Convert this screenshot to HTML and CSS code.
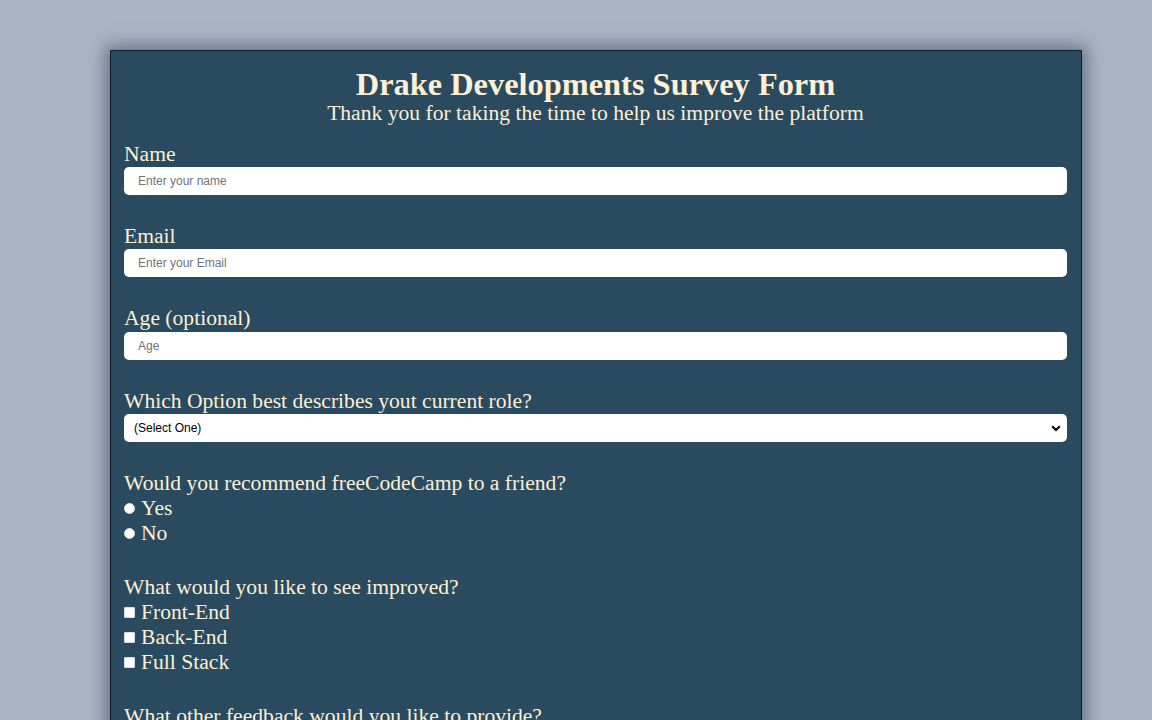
FILE: index.html
```html
<!DOCTYPE html>
<html lang="en">
<head>
<meta charset="utf-8">
<title>Drake Developments Survey Form</title>
<link rel="stylesheet" href="styles.css">
</head>
<body>
<main class="card">
  <header class="head">
    <h1 class="title">Drake Developments Survey Form</h1>
    <p class="subtitle">Thank you for taking the time to help us improve the platform</p>
  </header>
  <form class="form">
    <div class="group">
      <label class="label" for="name">Name</label>
      <input class="field" id="name" type="text" placeholder="Enter your name">
    </div>
    <div class="group">
      <label class="label" for="email">Email</label>
      <input class="field" id="email" type="email" placeholder="Enter your Email">
    </div>
    <div class="group">
      <label class="label" for="age">Age (optional)</label>
      <input class="field" id="age" type="number" placeholder="Age">
    </div>
    <div class="group">
      <label class="label" for="role">Which Option best describes yout current role?</label>
      <div class="select-wrap">
        <select class="field select" id="role">
          <option>(Select One)</option>
        </select>
        <svg class="chev" width="10" height="7" viewBox="0 0 10 7"><path d="M1.2 1.3 L5 5 L8.8 1.3" fill="none" stroke="#000" stroke-width="2"/></svg>
      </div>
    </div>
    <div class="group">
      <p class="label">Would you recommend freeCodeCamp to a friend?</p>
      <label class="choice"><input class="radio" type="radio" name="rec">Yes</label>
      <label class="choice"><input class="radio" type="radio" name="rec">No</label>
    </div>
    <div class="group">
      <p class="label">What would you like to see improved?</p>
      <label class="choice"><input class="check" type="checkbox">Front-End</label>
      <label class="choice"><input class="check" type="checkbox">Back-End</label>
      <label class="choice"><input class="check" type="checkbox">Full Stack</label>
    </div>
    <div class="group">
      <p class="label">What other feedback would you like to provide?</p>
    </div>
  </form>
</main>
</body>
</html>
```
FILE: styles.css
```css
html, body {
  margin: 0;
  padding: 0;
}
body {
  background: #abb4c4;
  font-family: "Liberation Serif", "Times New Roman", serif;
  color: #fdf0d5;
  padding: 50px 70px 40px 110px;
}
.card {
  background: #2a4a5f;
  border: 1px solid #0e1d29;
  box-shadow: 0 0 16px 4px rgba(40, 55, 75, 0.55);
  padding: 16px 14px 20px 13px;
}
.head {
  text-align: center;
}
.title {
  margin: 0;
  font-size: 32.4px;
  font-weight: bold;
  line-height: 34px;
}
.subtitle {
  margin: 0;
  font-size: 21.6px;
  line-height: 25px;
}
.form {
  margin-top: 15.7px;
  display: flex;
  flex-direction: column;
  gap: 29px;
}
.group {
  display: flex;
  flex-direction: column;
}
.label {
  margin: 0;
  font-size: 21.6px;
  line-height: 25.3px;
}
.field {
  box-sizing: border-box;
  width: 100%;
  height: 28px;
  border: none;
  border-radius: 5px;
  background: #fff;
  font-family: "Liberation Sans", Arial, sans-serif;
  font-size: 12px;
  padding: 0 14px;
  color: #000;
  outline: none;
}
.field::placeholder {
  color: #6f7378;
}
.select-wrap {
  position: relative;
}
.select {
  appearance: none;
  -webkit-appearance: none;
  padding: 0 10px;
  color: #000;
}
.chev {
  position: absolute;
  right: 6px;
  top: 11px;
  pointer-events: none;
}
.choice {
  display: flex;
  align-items: center;
  font-size: 21.6px;
  line-height: 25px;
  height: 25px;
}
.radio, .check {
  appearance: none;
  -webkit-appearance: none;
  margin: 0 6px 1px 0;
  width: 11px;
  height: 11px;
  background: #fff;
  border: 1px solid #d8dde2;
  box-sizing: border-box;
  flex: none;
}
.radio {
  border-radius: 50%;
}
.check {
  border-radius: 1px;
}
```
